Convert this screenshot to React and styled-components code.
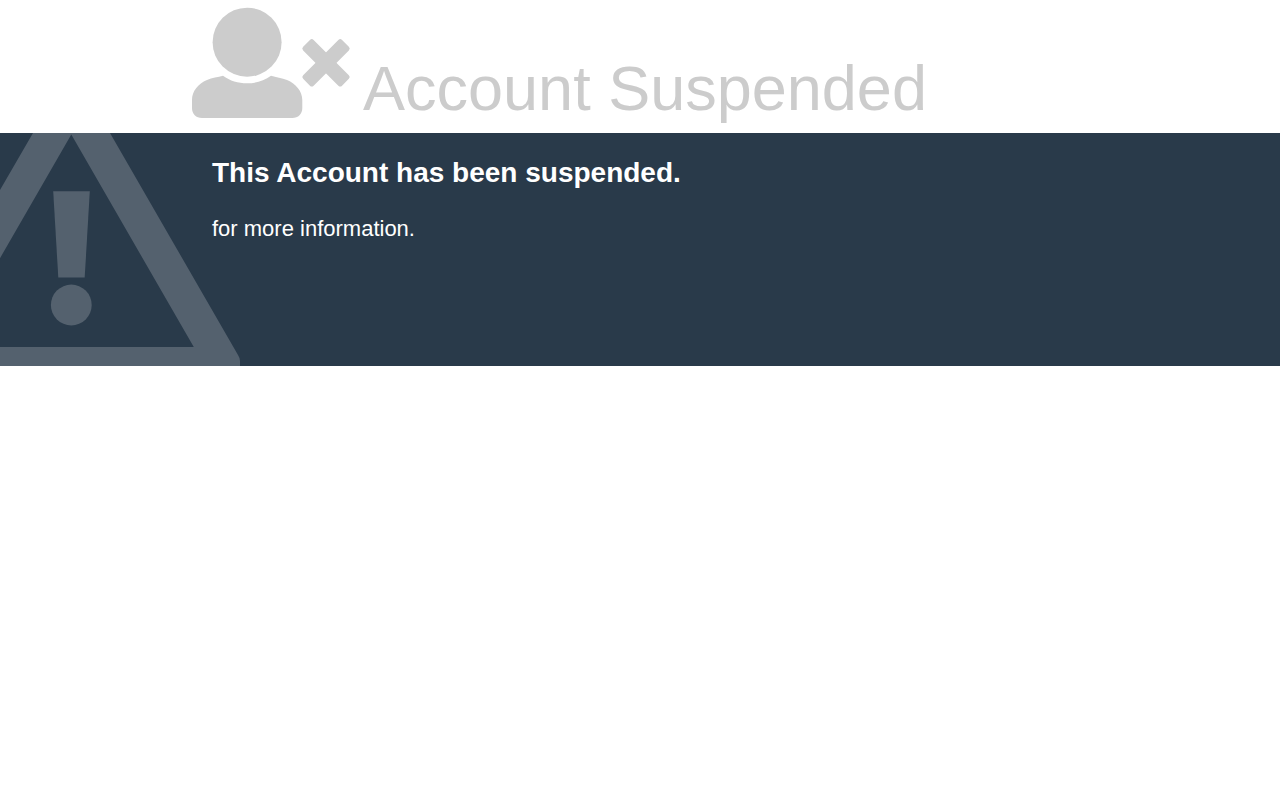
import React from "react";
import styled, { createGlobalStyle } from "styled-components";

const GlobalStyle = createGlobalStyle`
  body {
    margin: 0;
    background: #ffffff;
    font-family: "Liberation Sans", Arial, Helvetica, sans-serif;
  }
`;

const Header = styled.header`
  display: flex;
  align-items: flex-end;
  gap: 13px;
  padding: 8px 15% 15px;
  color: #cccccc;
`;

const UserIcon = styled.svg`
  flex: none;
  width: 158px;
  height: 110px;
  overflow: visible;
  fill: currentColor;
`;

const Status = styled.span`
  font-size: 63px;
  line-height: 60px;
`;

const Panel = styled.main`
  position: relative;
  box-sizing: border-box;
  min-height: 233px;
  padding: 24px 15%;
  overflow: hidden;
  background: #293a4a;
  color: #ffffff;
`;

const WarningIcon = styled.svg`
  position: absolute;
  top: 0;
  left: 0;
  width: 240px;
  height: 233px;
  fill: #54616e;
`;

const Message = styled.section`
  position: relative;
  display: flex;
  flex-direction: column;
  gap: 27px;
  padding: 0 20px;
`;

const Reason = styled.h1`
  margin: 0;
  font-size: 28px;
  line-height: 32px;
`;

const Detail = styled.p`
  margin: 0;
  font-size: 22px;
  line-height: 26px;
`;

export default function App() {
  return (
    <>
      <GlobalStyle />
      <Header>
        <UserIcon viewBox="0 0 158 110" aria-hidden="true">
          <circle cx="55.1" cy="34.2" r="34.5" />
          <path d="M31 67.800C38 73 46 75.300 55 75.300S72 73 79 67.800C84 69.500 90 70 95 72C104 75.500 110.300 83.500 110.300 92V100C110.300 106 106.300 110 100.300 110H10C4 110 0 106 0 100V92C0 83.500 6 75.500 15 72C20 70 26 69 31 67.800Z" />
          <g transform="translate(134 54.8) rotate(45)">
            <rect x="-27.5" y="-7.4" width="55" height="14.8" rx="2.6" />
            <rect x="-7.4" y="-27.5" width="14.8" height="55" rx="2.6" />
          </g>
        </UserIcon>
        <Status>Account Suspended</Status>
      </Header>
      <Panel>
        <WarningIcon viewBox="0 0 240 233" aria-hidden="true">
          <path d="M33 0H110L238 222Q240 225 240 228V233H0V214H193.800L71.300 1.600L0 125.200V57Z" />
          <path d="M53.200 58.300H89.800L84.700 144.600H58.300Z" />
          <circle cx="71.3" cy="172" r="20.4" />
        </WarningIcon>
        <Message>
          <Reason>This Account has been suspended.</Reason>
          <Detail>for more information.</Detail>
        </Message>
      </Panel>
    </>
  );
}
